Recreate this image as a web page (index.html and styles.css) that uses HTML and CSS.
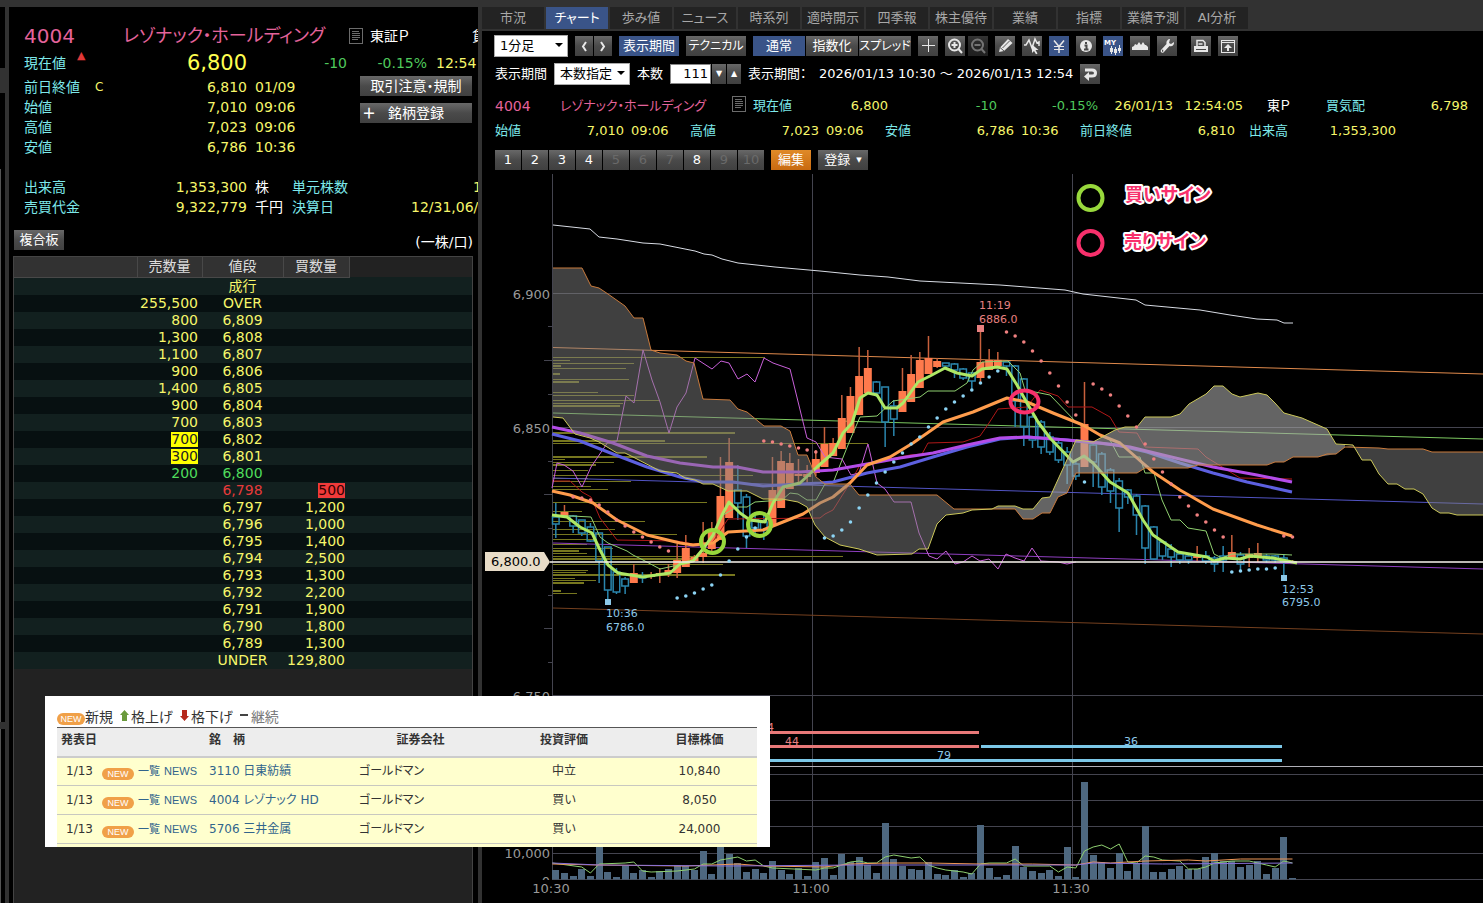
FILE: index.html
```html
<!DOCTYPE html>
<html lang="ja">
<head>
<meta charset="utf-8">
<title>4004 レゾナック・ホールディング</title>
<link rel="stylesheet" href="styles.css">
</head>
<body>
<div class="app">
  <div class="edge"><span class="edge-top"></span><span class="edge-line"></span><span class="edge-gap"></span><span class="edge-line edge-short"></span></div>

  <section class="quote-panel">
    <header class="quote-title">
      <span class="code">4004</span>
      <span class="name">レゾナック・ホールディング</span>
      <svg class="doc" viewBox="0 0 14 16"><rect x=".5" y=".5" width="13" height="15"/><path d="M3 3.5h7M3 5.5h8M3 7.5h8M3 9.5h8M3 11.5h6"/></svg>
      <span class="market">東証Ｐ</span>
      <span class="loan">貸</span>
    </header>
    <div class="quote-last">
      <span class="label">現在値</span><span class="up">▲</span><strong>6,800</strong>
      <span class="diff">-10</span><span class="rate">-0.15%</span><span class="time">12:54</span>
    </div>
    <div class="quote-body">
      <div class="facts">
        <span class="label">前日終値</span><span class="flag">C</span><span class="num">6,810</span><span>01/09</span>
        <span class="label">始値</span><span></span><span class="num">7,010</span><span>09:06</span>
        <span class="label">高値</span><span></span><span class="num">7,023</span><span>09:06</span>
        <span class="label">安値</span><span></span><span class="num">6,786</span><span>10:36</span>
      </div>
      <div class="quote-actions">
        <button type="button">取引注意・規制</button>
        <button type="button" class="add"><i>＋</i><span>銘柄登録</span></button>
      </div>
    </div>
    <div class="facts totals">
      <span class="label">出来高</span><span class="num">1,353,300</span><span class="unit">株</span><span class="label">単元株数</span><span class="cut one">100</span>
      <span class="label">売買代金</span><span class="num">9,322,779</span><span class="unit">千円</span><span class="label">決算日</span><span class="cut">12/31,06/30</span>
    </div>
    <div class="board-bar"><button type="button">複合板</button><span>(一株/口)</span></div>
    <div class="board">
      <table>
        <colgroup><col class="c1"><col class="c2"><col class="c3"><col class="c4"><col></colgroup>
        <thead><tr><th></th><th>売数量</th><th>値段</th><th>買数量</th><td></td></tr></thead>
        <tbody>
          <tr><td></td><td></td><td>成行</td><td></td><td></td></tr>
          <tr><td></td><td>255,500</td><td>OVER</td><td></td><td></td></tr>
          <tr><td></td><td>800</td><td>6,809</td><td></td><td></td></tr>
          <tr><td></td><td>1,300</td><td>6,808</td><td></td><td></td></tr>
          <tr><td></td><td>1,100</td><td>6,807</td><td></td><td></td></tr>
          <tr><td></td><td>900</td><td>6,806</td><td></td><td></td></tr>
          <tr><td></td><td>1,400</td><td>6,805</td><td></td><td></td></tr>
          <tr><td></td><td>900</td><td>6,804</td><td></td><td></td></tr>
          <tr><td></td><td>700</td><td>6,803</td><td></td><td></td></tr>
          <tr><td></td><td><mark>700</mark></td><td>6,802</td><td></td><td></td></tr>
          <tr><td></td><td><mark>300</mark></td><td>6,801</td><td></td><td></td></tr>
          <tr class="green"><td></td><td>200</td><td>6,800</td><td></td><td></td></tr>
          <tr class="red"><td></td><td></td><td>6,798</td><td><mark>500</mark></td><td></td></tr>
          <tr><td></td><td></td><td>6,797</td><td>1,200</td><td></td></tr>
          <tr><td></td><td></td><td>6,796</td><td>1,000</td><td></td></tr>
          <tr><td></td><td></td><td>6,795</td><td>1,400</td><td></td></tr>
          <tr><td></td><td></td><td>6,794</td><td>2,500</td><td></td></tr>
          <tr><td></td><td></td><td>6,793</td><td>1,300</td><td></td></tr>
          <tr><td></td><td></td><td>6,792</td><td>2,200</td><td></td></tr>
          <tr><td></td><td></td><td>6,791</td><td>1,900</td><td></td></tr>
          <tr><td></td><td></td><td>6,790</td><td>1,800</td><td></td></tr>
          <tr><td></td><td></td><td>6,789</td><td>1,300</td><td></td></tr>
          <tr><td></td><td></td><td>UNDER</td><td>129,800</td><td></td></tr>
        </tbody>
      </table>
    </div>
  </section>

  <main class="chart-panel">
    <nav class="tabs">
      <a href="#">市況</a><a href="#" class="active">チャート</a><a href="#">歩み値</a><a href="#">ニュース</a><a href="#">時系列</a><a href="#">適時開示</a><a href="#">四季報</a><a href="#">株主優待</a><a href="#">業績</a><a href="#">指標</a><a href="#">業績予測</a><a href="#">AI分析</a>
    </nav>
    <div class="toolbar">
      <span class="select bar-type"><select aria-label="足種"><option>1分足</option></select></span>
      <span class="group">
        <button type="button" class="nav" aria-label="前へ"><svg viewBox="0 0 18 20"><path class="st" d="M11 6l-3 4.500 3 4.500"/></svg></button>
        <button type="button" class="nav" aria-label="次へ"><svg viewBox="0 0 18 20"><path class="st" d="M7 6l3 4.500-3 4.500"/></svg></button>
      </span>
      <button type="button" class="wide on">表示期間</button>
      <button type="button" class="wide kana">テクニカル</button>
      <span class="group">
        <button type="button" class="mode on">通常</button>
        <button type="button" class="mode">指数化</button>
        <button type="button" class="mode kana">スプレッド</button>
      </span>
      <button type="button" class="icon" aria-label="十字線"><svg viewBox="0 0 20 20"><path class="thin" d="M10.500 3v13M4 9.500h13"/></svg></button>
      <span class="zoom">
        <button type="button" class="icon" aria-label="拡大"><svg viewBox="0 0 20 20"><circle class="st" cx="9.500" cy="9" r="5.500"/><path class="st" d="M13.500 13l3.500 4M9.500 6v6M6.500 9h6"/></svg></button>
        <button type="button" class="icon dim" aria-label="縮小" disabled><svg viewBox="0 0 20 20"><circle class="st" cx="9.500" cy="9" r="5.500"/><path class="st" d="M13.500 13l3.500 4M6.500 9h6"/></svg></button>
      </span>
      <button type="button" class="icon" aria-label="描画"><svg viewBox="0 0 20 20"><path class="fi" d="M4 16l1-4.500L13 3l4.500 4-8.500 8z"/><path class="cut" d="M5 11.500l4 3.500M7.500 12l7-7"/></svg></button>
      <button type="button" class="icon" aria-label="線選択"><svg viewBox="0 0 20 20"><path class="mid" d="M2 9h2l3-5 3 8 3-9 2 4 2-1v4"/><path class="fi" d="M10 8.500l6.500 5.500h-3l2 3.500-1.500.8-2-3.300-2 2z"/></svg></button>
      <button type="button" class="icon on" aria-label="円"><svg viewBox="0 0 20 20"><path class="mid" d="M5 4.500l5 6 5-6M10 10.500v6.500"/><path class="thin" d="M5 10.500h10M5 13.500h10"/></svg></button>
      <button type="button" class="icon" aria-label="情報"><svg viewBox="0 0 20 20"><circle class="fi" cx="10" cy="10" r="6"/><path class="dark" d="M10 6v2M8.500 9.500h2v4M8 13.500h4.500"/></svg></button>
      <button type="button" class="icon on" aria-label="マイチャート"><svg viewBox="0 0 20 20"><text x="1" y="9">MY</text><path class="fi" d="M7 12h3v4h-3zM11 13h3v4h-3zM15 12h3v3h-3zM8 10h1v8h-1zM12 11h1v8h-1zM16 9h1v8h-1z"/></svg></button>
      <button type="button" class="icon" aria-label="価格帯"><svg viewBox="0 0 20 20"><path class="fi" d="M2 14V11l2-1 1-2 2 1 2-3 2 3 2-3 2 3h1l2 2v3z"/></svg></button>
      <button type="button" class="icon" aria-label="設定"><svg viewBox="0 0 20 20"><path class="fi" d="M13 3l-1 4 2 1 3-2c.5 3-2 5-4.500 4L6.500 16.500c-2 1-3.500-1-2.500-2.500L9.500 8C9 5 11 3 13 3z"/><path class="dark" d="M5 14.800h1.200"/></svg></button>
      <button type="button" class="icon print" aria-label="印刷"><svg viewBox="0 0 20 20"><path class="mid" d="M6 10V4.500h6l2 2V10M7.500 8h4"/><path class="fi" d="M3 10h14v6H3z"/><path class="thin-dark" d="M5 13.500h10"/></svg></button>
      <button type="button" class="icon" aria-label="別画面"><svg viewBox="0 0 20 20"><rect class="thin" x="3.500" y="4.500" width="13" height="12"/><path class="thin" d="M3.500 6.500h13"/><path class="fi" d="M10 8l4 4h-3v3H9v-3H6z"/></svg></button>
    </div>
    <div class="period">
      <label for="range">表示期間</label>
      <span class="select range"><select id="range"><option>本数指定</option></select></span>
      <label for="count">本数</label>
      <input id="count" type="text" value="111">
      <span class="spin"><button type="button" aria-label="減らす">▼</button><button type="button" aria-label="増やす">▲</button></span>
      <span class="colon">表示期間：</span>
      <span class="dates">2026/01/13 10:30 ～ 2026/01/13 12:54</span>
      <button type="button" class="icon" aria-label="戻す"><svg viewBox="0 0 20 20"><path class="heavy" d="M5 6h7q3.500 0 3.500 3t-3.500 3H8"/><path class="fi" d="M9 8v9L4 12.500z"/></svg></button>
    </div>
    <div class="ticker row1">
      <span class="pink code">4004</span><span class="pink">レゾナック・ホールディング</span>
      <svg class="doc" viewBox="0 0 14 16"><rect x=".5" y=".5" width="13" height="15"/><path d="M3 3.500h7M3 5.500h8M3 7.500h8M3 9.500h8M3 11.500h6"/></svg>
      <span class="label">現在値</span><span class="num">6,800</span><span class="num down">-10</span><span class="num down">-0.15%</span><span class="num">26/01/13</span><span class="num">12:54:05</span><span class="white">東Ｐ</span><span class="label">買気配</span><span class="num">6,798</span>
    </div>
    <div class="ticker row2">
      <span class="label">始値</span><span class="num">7,010</span><span>09:06</span>
      <span class="label">高値</span><span class="num">7,023</span><span>09:06</span>
      <span class="label">安値</span><span class="num">6,786</span><span>10:36</span>
      <span class="label">前日終値</span><span class="num">6,810</span><span class="label">出来高</span><span class="num">1,353,300</span>
    </div>
    <div class="presets">
      <span class="group">
        <button type="button">1</button><button type="button">2</button><button type="button">3</button><button type="button">4</button><button type="button" disabled>5</button><button type="button" disabled>6</button><button type="button" disabled>7</button><button type="button">8</button><button type="button" disabled>9</button><button type="button" disabled>10</button>
      </span>
      <button type="button" class="edit">編集</button>
      <button type="button" class="save">登録<i>▼</i></button>
    </div>
    <svg class="chart" role="img" aria-label="1分足チャート">
      <defs><clipPath id="axis-clip"><rect x="482" y="172" width="80" height="708"/></clipPath></defs>
      <g transform="translate(-482 -172)">
        <path class="grid" d="M552.500 174V879M812.500 174V879M1072.500 174V879M552 293.500H3000M552 427.500H3000M552 695.500H3000M552 774.500H3000M552 800.500H3000M552 826.500H3000M552 853.500H3000M552 879.500H3000"/>
        <path class="grid" d="M548 326.500h4M544 360.500h8M548 394.500h4M548 461.500h4M544 494.500h8M548 528.500h4M548 595.500h4M544 628.500h8M548 662.500h4"/>
        <path class="split" d="M552 766.500H3000"/>
        <g id="profile" class="profile"></g>
        <g class="trend">
          <path stroke="#e08a4c" d="M553 347.500L1483 374"/>
          <path stroke="#7cc860" d="M553 413L1483 439"/>
          <path stroke="#5254c4" d="M553 478L1483 504"/>
          <path stroke="#8f3fc0" d="M553 543L1483 569"/>
          <path stroke="#75401f" d="M553 608L1483 634"/>
        </g>
        <g id="candles"></g>
        <polyline class="l1" stroke="#d8dce4" points="553,225 590,229 599,237 617,239 643,243 660,244 695,251 704,254 712,255 722,259 738,263 775,267 820,271 860,275 888,277 920,281 960,283 1000,285 1065,290 1083,294 1136,300 1145,305 1200,310 1230,315 1257,319 1277,320 1284,323 1293,323"/>
        <polyline class="l1" stroke="#b01818" points="552,481 570,481 582,492 591,497 600,518 617,540 677,541 693,544 712,543 728,519 820,518 825,514 833,510 850,483 860,465 910,455 922,454 928,443 963,442 980,436 989,423 998,409 1027,407 1040,390 1058,396 1068,407 1092,407 1110,417 1119,432 1137,433 1145,447 1198,449 1206,457 1240,478 1292,479"/>
        <polyline class="l1" stroke="#8fd070" points="552,515 591,517 600,537 608,543 627,551 633,555 643,560 660,569 687,563 697,558 713,537 723,515 737,507 747,507 755,502 782,500 790,493 798,494 807,500 816,500 825,484 833,483 842,460 850,440 860,417 877,416 893,401 920,397 928,391 955,391 967,383 973,370 982,362 1008,361 1020,373 1025,390 1050,395 1077,423 1100,435 1110,440 1119,457 1140,457 1145,473 1154,473 1162,500 1171,520 1180,520 1188,528 1206,531 1214,554 1222,558 1232,554 1273,554 1292,555"/>
        <polyline class="l1" stroke="#c860d8" points="552,488 557,463 564,465 573,471 582,487 591,467 608,442 617,441 626,396 634,403 643,350 652,380 660,402 669,433 677,407 686,393 695,358 712,369 721,361 729,363 738,379 747,374 755,382 764,358 773,363 790,369 805,430 807,438 816,442 825,457 842,459 851,475 859,473 868,444 877,483 885,489 894,502 911,502 919,533 929,556 937,559 946,551 955,564 963,562 972,556 980,561 989,559 998,569 1006,554 1015,558 1024,561 1032,548 1041,561 1058,562 1067,564 1076,562"/>
        <polyline class="l3" stroke="#5d60e0" points="552,434 580,441 613,454 647,467 680,477 703,482 733,482 763,486 820,483 833,482 867,473 900,467 933,457 967,447 1000,439 1027,437 1067,440 1117,445 1147,452 1180,463 1213,473 1247,482 1292,492"/>
        <polyline class="l3" stroke="#b44ce8" points="552,427 580,433 613,443 647,456 680,463 713,467 737,467 763,472 800,472 833,470 867,464 900,458 933,453 967,445 1000,438 1027,437 1067,440 1100,443 1130,447 1163,455 1213,467 1257,475 1292,482"/>
        <polyline class="l3" stroke="#ff9c4c" points="552,491 570,495 593,503 617,520 647,535 680,543 693,545 713,543 728,532 763,530 783,522 803,514 820,503 833,497 850,483 867,465 890,457 913,443 943,422 973,412 1007,398 1027,402 1053,413 1083,425 1100,435 1120,443 1137,458 1153,472 1180,490 1213,509 1257,525 1292,536"/>
        <polyline class="l3" stroke="#aee865" points="552,515 567,517 580,527 592,533 600,550 608,565 618,573 643,577 670,573 680,564 693,561 703,549 713,535 722,515 729,502 740,513 750,520 765,522 773,503 783,487 800,483 817,467 833,453 843,433 852,423 860,398 868,393 877,395 885,408 897,408 903,403 918,382 930,376 945,368 957,373 972,376 982,369 997,367 1007,369 1017,385 1027,403 1038,422 1050,438 1073,462 1084,456 1093,463 1110,482 1128,493 1143,520 1153,535 1178,552 1207,557 1214,561 1225,558 1240,559 1250,556 1273,558 1297,563"/>
        <polygon class="cloud" points="553,268 582,268 591,286 599,288 608,294 625,306 634,318 643,318 651,350 660,353 677,355 686,361 694,363 703,399 730,400 738,409 747,412 764,426 781,426 790,431 798,455 807,455 816,477 825,484 850,484 859,495 937,495 954,509 992,509 972,510 963,513 946,515 937,524 928,549 919,549 912,554 877,555 859,549 840,545 825,537 815,525 807,507 798,502 782,499 763,499 747,491 728,491 713,484 703,484 695,480 685,478 677,473 660,471 635,458 625,453 617,453 599,442 590,438 575,434 563,418 553,417"/>
        <polygon class="cloud bright" points="992,509 998,506 1015,506 1023,509 1033,509 1042,498 1050,497 1076,440 1093,442 1115,430 1125,427 1137,427 1145,417 1171,417 1180,414 1189,404 1206,394 1214,386 1223,386 1232,394 1240,397 1258,393 1267,395 1275,403 1284,413 1302,418 1327,429 1336,444 1345,445 1345,447 1336,454 1318,457 1293,457 1284,462 1275,462 1267,465 1198,465 1188,468 1145,468 1137,473 1076,473 1067,493 1058,497 1050,513 1042,513 1033,519 1023,519 1015,509"/>
        <polygon class="cloud" points="1345,447 1353,445 1362,460 1371,460 1379,474 1388,484 1397,484 1405,489 1414,489 1423,494 1432,508 1440,513 1449,513 1457,515 1483,515 1483,452 1432,452 1423,449 1388,449 1379,448"/>
        <polyline class="l1" stroke="#c87a3c" points="553,268 582,268 591,286 599,288 608,294 625,306 634,318 643,318 651,350 660,353 677,355 686,361 694,363 703,399 730,400 738,409 747,412 764,426 781,426 790,431 798,455 807,455 816,477 825,484 850,484 859,495 937,495 954,509 1015,509 1023,519 1033,519 1042,513 1050,513 1058,497 1067,493 1076,473 1137,473 1145,468 1188,468 1198,465 1267,465 1275,462 1284,462 1293,457 1318,457 1327,454 1336,454 1345,447 1379,448 1388,449 1423,449 1432,452 1483,452"/>
        <polyline class="l1" stroke="#ccc85a" points="553,417 563,418 575,434 590,438 599,442 617,453 625,453 635,458 660,471 677,473 685,478 695,480 703,484 713,484 728,491 747,491 763,499 782,499 798,502 807,507 815,525 825,537 840,545 859,549 877,555 912,554 919,549 928,549 937,524 946,515 963,513 972,510 992,509 998,506 1015,506 1023,509 1033,509 1042,498 1050,497 1076,440 1093,442 1115,430 1125,427 1137,427 1145,417 1171,417 1180,414 1189,404 1206,394 1214,386 1223,386 1232,394 1240,397 1258,393 1267,395 1275,403 1284,413 1302,418 1327,429 1336,444 1353,445 1362,460 1371,460 1379,474 1388,484 1397,484 1405,489 1414,489 1423,494 1432,508 1440,513 1449,513 1457,515 1483,515"/>
        <path class="last" d="M550 562H3000"/>
        <g id="sar"></g>
        <path class="tag" d="M485 552h59l6 10-6 9h-59z"/>
        <text class="tag-text" x="491" y="566">6,800.0</text>
        <g class="axis" text-anchor="end" clip-path="url(#axis-clip)">
          <text x="550" y="299">6,900</text><text x="550" y="433">6,850</text><text x="550" y="701">6,750</text><text x="550" y="858">10,000</text><text x="550" y="886">0</text>
        </g>
        <g class="axis" text-anchor="middle">
          <text x="551" y="893">10:30</text><text x="811" y="893">11:00</text><text x="1071" y="893">11:30</text>
        </g>
        <g class="peak"><rect x="977" y="325" width="7" height="7"/><text x="979" y="309">11:19</text><text x="979" y="323">6886.0</text></g>
        <g class="dip"><rect x="605" y="599" width="6" height="6"/><text x="606" y="617">10:36</text><text x="606" y="631">6786.0</text><rect x="1281" y="575" width="6" height="6"/><text x="1282" y="593">12:53</text><text x="1282" y="606">6795.0</text></g>
        <path class="wave-r" d="M640 732.500H979M640 746.500H979"/>
        <path class="wave-b" d="M981 746.500H1282M640 760.500H1282"/>
        <g class="peak"><text x="760" y="731">44</text><text x="785" y="745">44</text></g>
        <g class="dip"><text x="1124" y="745">36</text><text x="937" y="759">79</text></g>
        <g id="volume" class="volume"></g>
        <g id="volume-lines"></g>
        <g class="signal buy"><circle cx="712.500" cy="541.500" r="11.500"/><circle cx="759.500" cy="524.500" r="11.500"/><circle cx="1090.500" cy="198" r="12"/></g>
        <g class="signal sell"><ellipse cx="1024.500" cy="401.500" rx="14" ry="11"/><circle cx="1090.500" cy="243" r="12"/></g>
        <g class="signal-text"><text x="1125" y="201">買いサイン</text><text x="1124" y="248">売りサイン</text></g>
      </g>
    </svg>
  </main>
</div>

<aside class="ratings">
  <p class="key"><span class="badge">NEW</span>新規
    <svg viewBox="0 0 9 11"><path fill="#6b9a3c" d="M4.500 0L9 5H7v6H2V5H0z"/></svg>格上げ
    <svg viewBox="0 0 9 11"><path fill="#b5281c" d="M4.500 11L9 6H7V0H2v6H0z"/></svg>格下げ
    <svg class="dash" viewBox="0 0 9 11"><path fill="#444" d="M0 4h8v2H0z"/></svg><span class="soft">継続</span></p>
  <table>
    <colgroup><col class="r1"><col class="r2"><col class="r3"><col class="r4"><col class="r5"><col class="r6"></colgroup>
    <thead><tr><th colspan="2">発表日</th><th>銘　柄</th><th class="mid">証券会社</th><th class="mid">投資評価</th><th class="mid target">目標株価</th></tr></thead>
    <tbody>
      <tr><td class="date">1/13</td><td><span class="tags"><span class="badge">NEW</span><a href="#">一覧</a><a href="#">NEWS</a></span></td><td><a href="#">3110 日東紡績</a></td><td>ゴールドマン</td><td class="mid">中立</td><td class="mid target">10,840</td></tr>
      <tr><td class="date">1/13</td><td><span class="tags"><span class="badge">NEW</span><a href="#">一覧</a><a href="#">NEWS</a></span></td><td><a href="#">4004 レゾナック HD</a></td><td>ゴールドマン</td><td class="mid">買い</td><td class="mid target">8,050</td></tr>
      <tr><td class="date">1/13</td><td><span class="tags"><span class="badge">NEW</span><a href="#">一覧</a><a href="#">NEWS</a></span></td><td><a href="#">5706 三井金属</a></td><td>ゴールドマン</td><td class="mid">買い</td><td class="mid target">24,000</td></tr>
      <tr class="next"><td colspan="6"></td></tr>
    </tbody>
  </table>
</aside>
<script src="chart.js"></script>
</body>
</html>
```

FILE: styles.css
```css
* { box-sizing: border-box; }

body {
  margin: 0;
  height: 100vh;
  overflow: hidden;
  background: #000;
  color: #fff;
  font: 13px/20px "DejaVu Sans", "Noto Sans CJK JP", sans-serif;
  font-feature-settings: "palt";
}

.app {
  display: flex;
  height: 100vh;
  border-top: 7px solid #323232;
}

button, select, input { font: inherit; color: inherit; font-feature-settings: inherit; }
a { text-decoration: none; }
i { font-style: normal; }

button {
  height: 20px;
  padding: 0;
  border: 0;
  background: linear-gradient(#686868, #4a4a4a 50%, #404040);
  color: #fff;
  line-height: 20px;
  text-align: center;
  white-space: nowrap;
}
button.on { background: #3a5488; }
button:disabled { color: #6a6a6a; }

.group { display: flex; gap: 1px; }
.label { color: #7de8ea; }
.doc { fill: none; stroke: #6c6c6c; stroke-width: 1; width: 14px; height: 16px; }

/* window edge */
.edge {
  flex: none;
  display: flex;
  flex-direction: column;
  width: 9px;
  border-right: 4px solid #323232;
}
.edge-top { height: 86px; border-bottom: 25px solid #323232; }
.edge-line { flex: 1; margin-top: 76px; width: 1px; background: #555; }
.edge-gap { height: 7px; background: #323232; }
.edge-short { flex: none; height: 174px; margin-top: 0; }

/* quote */
.quote-panel {
  flex: none;
  display: flex;
  flex-direction: column;
  width: 473px;
  overflow: hidden;
  border-right: 4px solid #323232;
  color: #f6f66a;
  font-size: 14px;
  white-space: nowrap;
}
.quote-title {
  display: flex;
  align-items: center;
  height: 43px;
  padding: 15px 0 0 15px;
}
.quote-title > * { flex: none; }
.quote-title .code { width: 99px; font-size: 20px; color: #e4639b; }
.quote-title .name { width: 226px; font-size: 18px; color: #e4639b; }
.quote-title .market { margin-left: 7px; width: 102px; color: #fff; }
.quote-title .loan { color: #fff; }

.quote-last {
  display: grid;
  grid-template-columns: 53px 28px 142px 100px 80px 60px;
  align-items: center;
  height: 26px;
  padding-left: 15px;
}
.quote-last .up { color: #e03838; font-size: 11px; line-height: 11px; align-self: start; }
.quote-last strong { font-size: 21px; font-weight: 400; text-align: right; color: #ffff50; }
.quote-last .diff, .quote-last .rate { text-align: right; color: #4fc95c; }
.quote-last .time { padding-left: 9px; }

.quote-body { display: flex; height: 101px; padding-left: 15px; }
.facts { display: grid; grid-template-columns: 71px 70px 82px 113px; align-content: start; }
.quote-body .facts { padding-top: 1px; }
.facts .num { text-align: right; }
.quote-body .facts span:nth-child(4n) { padding-left: 8px; }
.facts .flag { font-size: 12px; }
.quote-actions { display: flex; flex-direction: column; gap: 7px; width: 112px; }
.quote-actions .add { display: flex; }
.quote-actions .add i { width: 18px; font-weight: 700; }
.quote-actions .add span { flex: 1; padding-right: 18px; }
.totals { grid-template-columns: 71px 152px 45px 70px 140px; height: 53px; padding-left: 15px; }
.totals .unit { color: #fff; padding-left: 8px; }
.totals .cut { padding-left: 49px; }
.totals .one { padding-left: 111px; }

.board-bar { display: flex; justify-content: space-between; padding: 0 5px; color: #fff; line-height: 24px; }
.board-bar button { width: 50px; font-size: 13px; }
.board {
  flex: 1;
  margin: 2px 5px 0 4px;
  border: 1px solid #444;
  border-bottom: 0;
  background: #222;
}
.board table { width: 100%; border-collapse: collapse; table-layout: fixed; }
.board .c1 { width: 123px; }
.board .c2 { width: 65px; }
.board .c3 { width: 81px; }
.board .c4 { width: 66px; }
.board th {
  height: 20px;
  padding: 0;
  border-right: 1px solid #484848;
  border-bottom: 1px solid #484848;
  background: #323232;
  color: #ddd;
  font-weight: 400;
  line-height: 19px;
}
.board td { height: 17px; padding: 0 4px 0 0; text-align: right; line-height: 17px; }
.board tbody td:nth-child(3) { padding: 0; text-align: center; }
.board tbody tr:nth-child(odd) { background: #12201f; }
.board tbody tr:nth-child(even) { background: #071011; }
.board mark { display: inline-block; height: 15px; line-height: 15px; background: #ff0; color: #222; }
.board .green { color: #4fdc5c; }
.board .red { color: #e63a3a; }
.board .red mark { background: #f03a3a; color: #300; }

/* chart panel */
.chart-panel { flex: 1; min-width: 0; display: flex; flex-direction: column; white-space: nowrap; }
.tabs { display: flex; gap: 2px; flex: none; height: 24px; background: #323232; border-bottom: 2px solid #323232; }
.tabs a { width: 62px; height: 22px; background: #232323; color: #a8a8a8; text-align: center; line-height: 22px; }
.tabs .active { background: #3a5488; color: #fff; }

.toolbar, .period, .presets { display: flex; flex: none; align-items: center; gap: 7px; height: 20px; }
.toolbar { margin: 5px 0 0 12px; }
.period { margin: 8px 0 0 13px; }
.toolbar .nav { width: 18px; }
.toolbar .wide { width: 60px; }
.toolbar .mode { width: 52px; }
.toolbar .kana { font-size: 12px; }
.zoom { display: flex; gap: 3px; }
.icon { flex: none; width: 20px; }
.icon.print { margin-left: 7px; }
.icon.dim { opacity: .5; }
button svg { display: block; width: 100%; height: 20px; fill: none; }
button svg text { font: bold 7px "DejaVu Sans", sans-serif; fill: #fff; }
.st { stroke: #e8e8e8; stroke-width: 2; }
svg .mid { stroke: #e8e8e8; stroke-width: 1.5; }
.thin { stroke: #e8e8e8; stroke-width: 1; }
.heavy { stroke: #e8e8e8; stroke-width: 3; }
.fi { fill: #e8e8e8; }
.icon .cut { stroke: #555; stroke-width: 1; }
.dark { stroke: #484848; stroke-width: 2; }
.thin-dark { stroke: #484848; stroke-width: 1; }

.select { position: relative; }
.select::after {
  content: "";
  position: absolute;
  top: 8px;
  right: 5px;
  border: 4px solid transparent;
  border-top-color: #000;
  border-bottom: 0;
}
.select select {
  display: block;
  width: 100%;
  height: 22px;
  padding: 0 0 0 5px;
  border: 1px solid #aaa;
  border-radius: 0;
  appearance: none;
  background: #fff;
  color: #000;
  line-height: 20px;
}
.bar-type { width: 74px; }
.range { width: 76px; }
.period input { width: 41px; height: 20px; padding: 0 2px; border: 1px solid #888; background: #fff; color: #000; text-align: right; }
.spin { display: flex; gap: 1px; margin-left: -6px; }
.spin button { width: 14px; font-size: 8px; }
.colon { width: 64px; }

.ticker { display: grid; flex: none; height: 20px; margin-left: 13px; color: #f6f66a; }
.ticker .num { text-align: right; }
.ticker .pink { color: #e4639b; }
.ticker .code { font-size: 14px; }
.ticker .white { color: #fff; padding-left: 24px; }
.ticker .down { color: #4fc95c; }
.row1 { margin-top: 12px; grid-template-columns: 65px 172px 21px 60px 75px 109px 101px 75px 70px 83px 60px 82px; }
.row2 { margin-top: 5px; grid-template-columns: 60px 69px 66px 60px 69px 66px 60px 69px 66px 90px 65px 68px 93px; }
.row2 span:nth-child(3), .row2 span:nth-child(6), .row2 span:nth-child(9) { padding-left: 7px; }
.row2 span:nth-child(12) { padding-left: 14px; }

.presets { margin: 9px 0 2px 13px; }
.presets .group button { width: 26px; }
.presets .edit { width: 40px; background: linear-gradient(#e08a28, #c86a10); }
.presets .save { width: 50px; }
.presets .save i { margin-left: 6px; font-size: 7px; vertical-align: 2px; }

/* chart drawing */
.chart { flex: 1; display: block; width: 100%; min-height: 0; overflow: hidden; }
.chart text { font-family: "DejaVu Sans", "Noto Sans CJK JP", sans-serif; }
.grid { stroke: #44444f; fill: none; }
.split { stroke: #b0b0b8; }
.trend path { stroke-width: 1; fill: none; }
.l1, .l3 { fill: none; stroke-width: 1; stroke-linejoin: round; }
.l3 { stroke-width: 3; }
.cloud { fill: #808080; fill-opacity: .5; }
.cloud.bright { fill: #a6a6a6; fill-opacity: .6; }
.profile { fill: #77771f; }
.rise { fill: #ff7a4c; }
.fall { fill: none; stroke: #2a86ae; stroke-width: 1.5; }
.wick-up { stroke: #c8603c; stroke-width: 1.5; }
.wick-down { stroke: #2a86ae; stroke-width: 1.5; }
.last { stroke: #ece8e0; stroke-width: 2; opacity: .8; }
.tag { fill: #e8dcc8; }
.tag-text { fill: #000; font-size: 13px; }
.axis { fill: #999; font-size: 13px; }
.peak { fill: #e88080; font-size: 11px; }
.dip { fill: #8cc8e8; font-size: 11px; }
.dot-up { fill: #8cd4f4; }
.dot-down { fill: #f08080; }
.wave-r { stroke: #e87878; stroke-width: 3; }
.wave-b { stroke: #7cc8e8; stroke-width: 3; }
.volume { fill: #4e6880; }
.signal { fill: none; stroke-width: 4; }
.buy { stroke: #98d83c; }
.sell { stroke: #f8306c; }
.signal-text { font-size: 18px; font-weight: 700; fill: #f8306c; stroke: #fff; stroke-width: 4px; stroke-linejoin: round; paint-order: stroke; }

/* ratings overlay */
.ratings {
  position: absolute;
  left: 45px;
  top: 696px;
  width: 725px;
  height: 151px;
  padding: 10px 13px 0 12px;
  overflow: hidden;
  background: #fff;
  color: #333;
  font-size: 12px;
  white-space: nowrap;
}
.key { display: flex; align-items: center; height: 21px; margin: 0; font-size: 14px; }
.key svg { width: 9px; height: 11px; margin: 0 2px 2px 7px; }
.key .soft { color: #777; }
.badge {
  display: inline-block;
  width: 32px;
  height: 12px;
  border-radius: 6px;
  background: #f0a048;
  color: #fff;
  font: 9px/13px "Liberation Sans", sans-serif;
  text-align: center;
}
.key .badge { width: 28px; margin-top: 5px; }
.ratings table { width: 100%; border-collapse: collapse; table-layout: fixed; border-top: 1px solid #555; }
.ratings th { height: 29px; padding: 0 0 3px 4px; background: #ededed; border-bottom: 2px solid #ccc; text-align: left; }
.ratings th:nth-child(2) { padding-left: 0; }
.ratings td { height: 29px; padding: 0; background: #ffffce; border-bottom: 1px solid #c8c8c0; }
.ratings .next td { height: 8px; }
.ratings .mid { text-align: center; padding-left: 0; padding-right: 0; }
.ratings .target { padding-right: 4px; }
.ratings .date { padding-left: 9px; }
.ratings a { color: #31648c; }
.tags { display: flex; align-items: center; gap: 4px; font: 11px/20px "Liberation Sans", "Noto Sans CJK JP", sans-serif; }
.tags .badge { margin-top: 5px; }
.r1 { width: 45px; }
.r2 { width: 107px; }
.r3 { width: 150px; }
.r4 { width: 123px; }
.r5 { width: 164px; }
```

FILE: chart.js
```js
const NS = 'http://www.w3.org/2000/svg';
const barX = i => 555.8 + 8.667 * i;

function add(parent, tag, attrs) {
  const el = document.createElementNS(NS, tag);
  for (const key in attrs) el.setAttribute(key, attrs[key]);
  parent.appendChild(el);
}

// direction (1 rise, 0 fall), high, body top, body bottom, low
const candles = [
  [0,503,517,524,538],[1,505,512,516,517],[0,515,516,526,533],[0,520,520,533,536],[0,523,527,541,542],
  [0,533,533,561,583],[0,547,547,590,600],[0,568,572,592,594],[0,577,579,586,594],[1,564,573,583,583],
  [0,572,576,578,583],[1,572,575,577,579],[1,568,573,575,583],[1,564,570,573,577],[1,544,560,573,578],
  [1,535,548,567,567],[1,555,557,561,562],[1,522,553,557,563],[1,522,532,549,552],[1,457,496,540,540],
  [1,438,462,518,518],[0,465,490,503,520],[0,494,497,536,548],[0,512,520,528,536],[0,515,522,530,540],
  [1,457,490,526,526],[1,451,461,508,508],[1,453,463,489,489],[1,459,474,476,483],[1,465,474,477,484],
  [1,450,459,473,476],[1,427,444,467,467],[1,438,443,456,456],[1,395,418,449,449],[1,387,396,433,433],
  [1,347,376,415,415],[1,350,368,393,393],[0,381,382,393,397],[0,387,387,422,447],[0,400,406,419,436],
  [1,368,391,412,412],[1,355,374,402,402],[1,352,360,388,388],[1,336,358,374,374],[1,358,361,367,368],
  [0,363,363,366,366],[0,363,364,370,378],[0,368,369,378,380],[0,372,373,381,391],[1,330,362,378,382],
  [1,349,360,370,370],[1,352,360,366,366],[0,362,362,366,376],[0,365,366,401,427],[0,378,379,427,446],
  [0,415,417,440,448],[0,420,422,447,454],[0,432,437,452,455],[0,440,443,460,463],[0,447,452,465,484],
  [0,460,464,476,480],[1,382,424,467,467],[0,443,445,462,487],[0,452,454,487,495],[0,468,470,491,503],
  [0,478,481,508,532],[0,489,490,497,504],[0,494,496,515,535],[0,505,506,548,564],[0,526,527,559,560],
  [0,540,542,556,560],[0,544,549,557,567],[0,552,554,560,564],[0,555,556,560,564],[1,546,556,558,561],
  [0,551,556,561,564],[0,556,558,564,572],[0,546,556,560,572],[1,535,552,558,559],[0,552,555,564,572],
  [1,548,554,558,567],[1,543,553,558,562],[0,554,556,560,563],[0,555,556,560,563],[0,554,558,562,576],
  [1,560,561,563,563]
];
const candleLayer = document.getElementById('candles');
candles.forEach(([up, high, top, bottom, low], i) => {
  const x = barX(i);
  add(candleLayer, 'path', { class: up ? 'wick-up' : 'wick-down', d: `M${x} ${high}V${top}M${x} ${bottom}V${low}` });
  add(candleLayer, 'rect', up
    ? { class: 'rise', x: x - 4, y: top, width: 8, height: bottom - top }
    : { class: 'fall', x: x - 3.3, y: top, width: 6.6, height: bottom - top });
});

// y, right end, thickness
const profile = [
  [357,765,1],[360,570,1],[363,634,1],[365,561,2],[368,626,1],[373,560,2],[379,629,1],[381,579,2],[392,598,1],
  [395,634,1],[400,659,1],[403,623,1],[405,620,2],[432,735,2],[440,665,2],[443,868,1],[456,707,2],[459,565,1],
  [462,614,1],[464,596,2],[470,588,1],[475,753,1],[478,588,1],[481,631,1],[486,591,1],[489,608,1],[502,707,1],
  [511,582,1],[521,645,1],[529,615,1],[534,677,1],[539,597,1],[544,587,1],[548,613,1],[550,579,2],[553,587,1],
  [556,843,1],[558,693,2],[564,723,1],[570,588,1],[572,586,1],[574,735,2],[578,575,1],[580,596,1],[582,584,2],
  [590,561,2],[593,577,1]
];
const profileLayer = document.getElementById('profile');
profile.forEach(([y, right, h]) => add(profileLayer, 'rect', { x: 553, y, width: right - 553, height: h }));

// first bar, class, y of each dot
const sar = [
  [2,'dot-down',[497,498,500,505,512,520,526,532,537,542,547,551]],
  [14,'dot-up',[598,596,593,589,585,575,561,549,537,528]],
  [24,'dot-down',[441,442,444,446,448,450,452]],
  [31,'dot-up',[538,536,530,522,508,495,483,472,462,453,444,437,427,418,409,402,396,390,383,377,371]],
  [52,'dot-down',[332,336,342,351,361,373,386,402,415]],
  [61,'dot-up',[482]],
  [62,'dot-down',[384,389,395,406,416,427,444,459,472,484,497,506,515,522,530,537]],
  [78,'dot-up',[572,571,570,569,569,568]],
  [84,'dot-down',[536,537]]
];
const sarLayer = document.getElementById('sar');
sar.forEach(([first, cls, ys]) => ys.forEach((y, k) => add(sarLayer, 'circle', { class: cls, cx: barX(first + k), cy: y, r: 1.8 })));

const volume = [
  870,873,876,869,876,800,872,877,866,873,870,877,871,869,865,866,870,851,874,840,854,863,872,869,873,861,870,874,
  868,876,862,858,875,854,862,857,865,873,823,859,866,869,870,862,874,875,870,877,873,825,868,877,875,846,867,871,
  873,870,876,847,877,782,855,862,868,853,871,863,826,872,872,869,866,869,869,857,853,861,861,867,865,861,874,868,
  837,878
];
const volumeLayer = document.getElementById('volume');
volume.forEach((y, i) => add(volumeLayer, 'rect', { x: Math.round(barX(i) - 3.5), y, width: 7, height: 879.5 - y }));

// bar, y
const volumeLines = [
  ['#8fd070', [[-.4,863],[3,867],[4,873],[5,864],[8,863],[9,862],[10,871],[11,872],[14,871],[16,869],[17,864],[18,864],
    [19,860],[21,857],[22,861],[23,860],[24,866],[25,868],[30,870],[31,868],[32,868],[34,862],[35,861],[36,863],[37,863],
    [38,857],[39,855],[41,858],[42,857],[43,865],[44,868],[45,870],[47,872],[48,874],[49,864],[50,863],[52,863],[53,859],
    [54,866],[57,866],[58,872],[59,867],[60,868],[61,851],[62,847],[63,845],[64,849],[65,844],[66,862],[67,863],[68,856],
    [69,857],[70,860],[72,861],[73,869],[74,869],[75,867],[76,863],[78,861],[80,861],[81,863],[82,865],[83,867],[84,861],[85,863]]],
  ['#f09858', [[-.4,864],[5,865],[15,866],[21,864],[24,866],[31,867],[34,864],[38,863],[43,863],[49,864],[55,864],[60,865],
    [62,862],[64,863],[68,861],[73,860],[75,861],[79,859],[85,859]]],
  ['#8870d8', [[-.4,863],[5,865],[20,866],[35,865],[50,865],[60,865],[62,863],[70,864],[85,863]]]
];
const lineLayer = document.getElementById('volume-lines');
volumeLines.forEach(([stroke, pts]) =>
  add(lineLayer, 'polyline', { class: 'l1', stroke, points: pts.map(([i, y]) => `${barX(i)},${y}`).join(' ') }));
```
